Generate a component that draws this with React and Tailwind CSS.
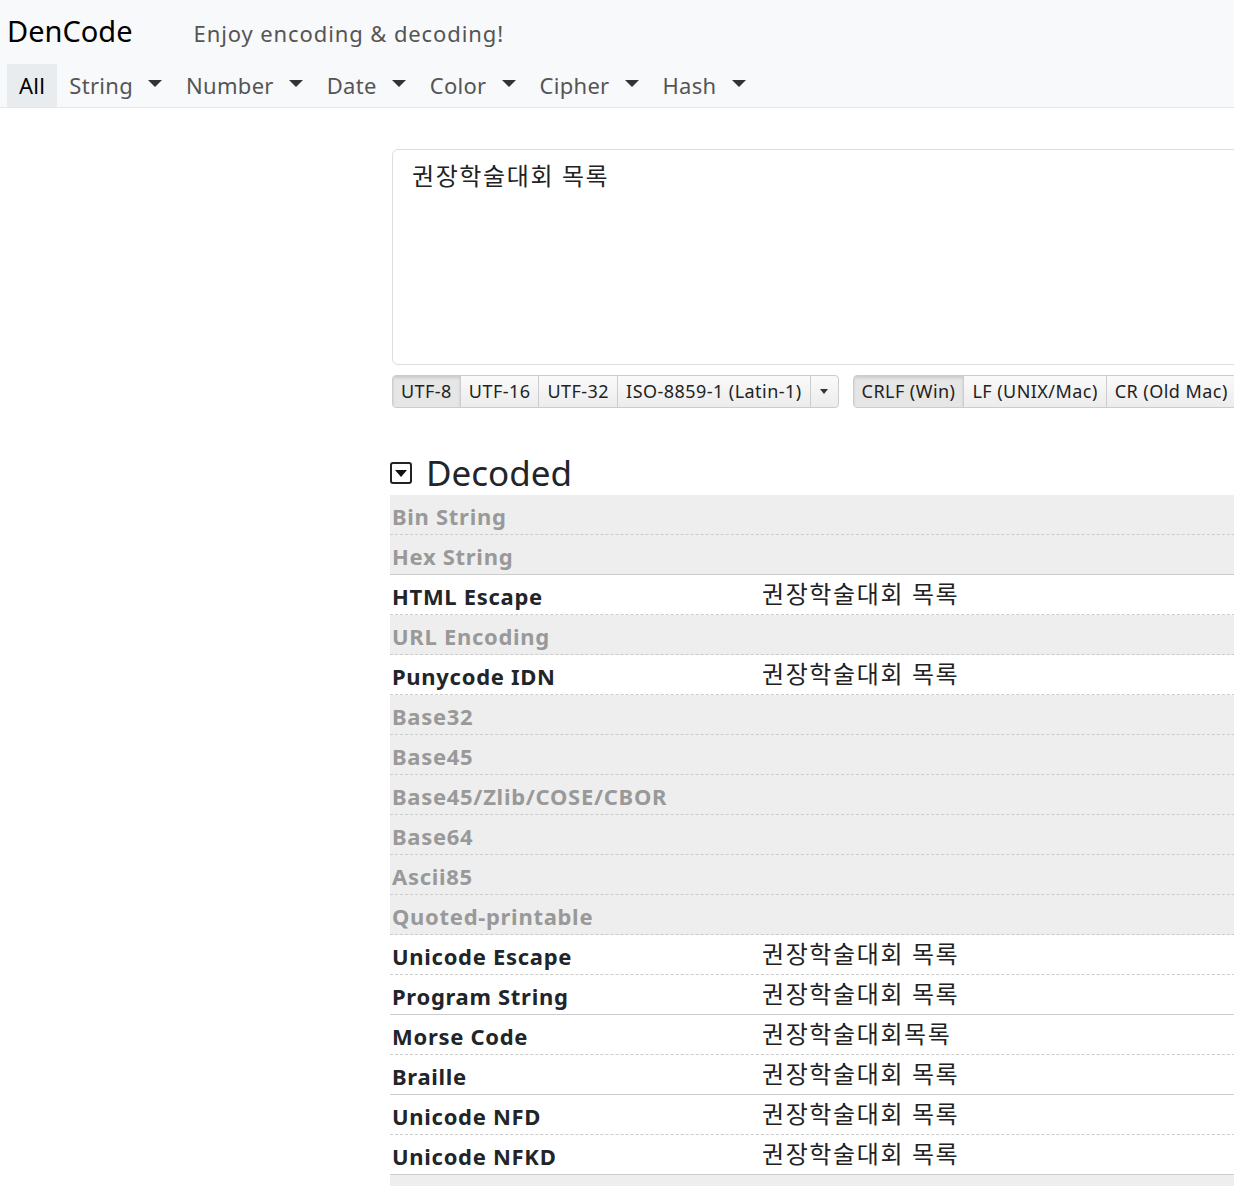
import React from 'react';

const font = { fontFamily: '"Noto Sans", "Noto Sans CJK KR", sans-serif' };

const VALUE = '권장학술대회 목록';

// border: 'd' dashed, 's' solid (bottom edge of each row)
const rows = [
  { label: 'Bin String', empty: true, border: 'd' },
  { label: 'Hex String', empty: true, border: 's' },
  { label: 'HTML Escape', value: VALUE, border: 'd' },
  { label: 'URL Encoding', empty: true, border: 'd' },
  { label: 'Punycode IDN', value: VALUE, border: 'd' },
  { label: 'Base32', empty: true, border: 'd' },
  { label: 'Base45', empty: true, border: 'd' },
  { label: 'Base45/Zlib/COSE/CBOR', empty: true, border: 'd' },
  { label: 'Base64', empty: true, border: 'd' },
  { label: 'Ascii85', empty: true, border: 'd' },
  { label: 'Quoted-printable', empty: true, border: 'd' },
  { label: 'Unicode Escape', value: VALUE, border: 'd' },
  { label: 'Program String', value: VALUE, border: 's' },
  { label: 'Morse Code', value: '권장학술대회목록', border: 'd' },
  { label: 'Braille', value: VALUE, border: 's' },
  { label: 'Unicode NFD', value: VALUE, border: 'd' },
  { label: 'Unicode NFKD', value: VALUE, border: 's' },
];

const Caret = () => (
  <span className="inline-block w-0 h-0 ml-[15px] border-l-[7px] border-r-[7px] border-t-[7px] border-l-transparent border-r-transparent border-t-[#333] align-middle mb-[4px]" />
);

const navItems = ['String', 'Number', 'Date', 'Color', 'Cipher', 'Hash'];

const BtnGroup = ({ items, active, dropdown }) => (
  <div className="flex h-[33px] rounded-[4px] border border-[#ccc] overflow-hidden text-[18px] tracking-[0.45px] text-[#222] bg-gradient-to-b from-[#fafafa] to-[#ececec] shrink-0">
    {items.map((it, i) => (
      <div
        key={it}
        className={`flex items-center px-[8px] whitespace-pre ${i > 0 ? 'border-l border-[#ccc]' : ''} ${i === active ? 'bg-[#e6e6e6] shadow-[inset_0_2px_3px_rgba(0,0,0,0.12)]' : ''}`}
      >
        {it}
      </div>
    ))}
    {dropdown && (
      <div className="flex items-center justify-center w-[28px] border-l border-[#ccc]">
        <span className="w-0 h-0 border-l-[4px] border-r-[4px] border-t-[5px] border-l-transparent border-r-transparent border-t-[#333]" />
      </div>
    )}
  </div>
);

export default function App() {
  return (
    <div className="w-[1234px] h-[1186px] overflow-hidden bg-white text-[#212529]" style={font}>
      {/* Header */}
      <div className="bg-[#f8f9fa] border-b border-[#e5e5e5] h-[108px] px-[7px]">
        <div className="flex items-baseline h-[64px] pt-[9px]">
          <span className="text-[29px] text-black leading-[44px]">DenCode</span>
          <span className="ml-[61px] text-[22px] text-[#555] tracking-[0.9px]">Enjoy encoding &amp; decoding!</span>
        </div>
        <div className="flex items-center h-[43px] text-[22px] text-[#555] tracking-[0.3px]">
          <div className="h-full flex items-center px-[12px] bg-[#e9ecef] text-black">All</div>
          {navItems.map((n) => (
            <div key={n} className="flex items-center pl-[12px] pr-[12px] h-full">
              {n}
              <Caret />
            </div>
          ))}
        </div>
      </div>

      {/* Main */}
      <div className="ml-[390px] w-[900px] pt-[41px]">
        <div className="ml-[2px] h-[216px] border border-[#ddd] rounded-[6px] px-[19px] pt-[8px] text-[24px] text-[#222] tracking-[1.6px]">
          {VALUE}
        </div>
        <div className="flex gap-[14px] mt-[10px] ml-[2px]">
          <BtnGroup items={['UTF-8', 'UTF-16', 'UTF-32', 'ISO-8859-1 (Latin-1)']} active={0} dropdown />
          <BtnGroup items={['CRLF (Win)', 'LF (UNIX/Mac)', 'CR (Old Mac)']} active={0} />
        </div>

        <div className="flex items-center mt-[43px] h-[44px]">
          <span className="w-[22px] h-[22px] border-[2px] border-[#222] rounded-[3px] flex items-center justify-center">
            <span className="w-0 h-0 border-l-[6px] border-r-[6px] border-t-[7px] border-l-transparent border-r-transparent border-t-[#111]" />
          </span>
          <span className="ml-[14px] text-[35px] leading-[44px] text-[#212529]">Decoded</span>
        </div>

        <div>
          {rows.map((r) => (
            <div
              key={r.label}
              className={`flex items-center h-[40px] px-[2px] pt-[4px] ${r.empty ? 'bg-[#eee] text-[#999]' : 'bg-white text-[#212529]'} ${r.border === 's' ? 'border-b border-[#ccc]' : 'border-b border-dashed border-[#ccc]'}`}
            >
              <span className="w-[370px] text-[22px] font-bold tracking-[0.7px]">{r.label}</span>
              {r.value && <span className="text-[24px] text-[#222] tracking-[1.6px] -mt-[6px]">{r.value}</span>}
            </div>
          ))}
          <div className="h-[40px] bg-[#eee]" />
        </div>
      </div>
    </div>
  );
}
